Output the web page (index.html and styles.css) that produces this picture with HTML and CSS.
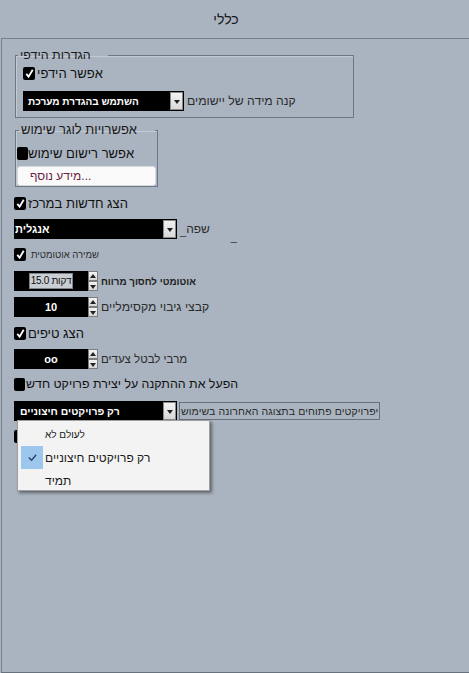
FILE: index.html
```html
<!DOCTYPE html>
<html lang="he">
<head>
    <meta charset="UTF-8">
    <title>כללי</title>
    <link rel="stylesheet" href="styles.css">
</head>
<body>
    <div class="title">כללי</div>

    <div class="panel">
        <fieldset class="group group-main">
            <legend>הגדרות הידפי</legend>
            <div class="check first">
                <span class="box"><svg viewBox="0 0 12 12"><path d="M2.5 6.5 L5 9.5 L9.5 2"/></svg></span>
                <span class="text">אפשר הידפי</span>
            </div>
            <div class="field gap-select">
                <div class="select select-scale">
                    <span class="value small">השתמש בהגדרת מערכת</span>
                    <span class="arrow"></span>
                </div>
                <span class="label">קנה מידה של יישומים</span>
            </div>
        </fieldset>

        <fieldset class="group group-log">
            <legend>אפשרויות לוגר שימוש</legend>
            <div class="check off-row">
                <span class="box empty"></span>
                <span class="text tight">אפשר רישום שימוש</span>
            </div>
            <div class="more">מידע נוסף...</div>
        </fieldset>

        <div class="check mt9">
            <span class="box"><svg viewBox="0 0 12 12"><path d="M2.5 6.5 L5 9.5 L9.5 2"/></svg></span>
            <span class="text">הצג חדשות במרכז</span>
        </div>

        <div class="field mt9">
            <div class="select">
                <span class="value lang-value">אנגלית</span>
                <span class="arrow"></span>
            </div>
            <span class="mnemonic">_</span>
            <span class="label lang">שפה</span>
            <span class="mnemonic far">_</span>
        </div>

        <div class="check mt8">
            <span class="box"><svg viewBox="0 0 12 12"><path d="M2.5 6.5 L5 9.5 L9.5 2"/></svg></span>
            <span class="text tiny">שמירה אוטומטית</span>
        </div>

        <div class="field mt10">
            <div class="spin">
                <div class="spin-field"><span class="spin-edit">15.0 דקות</span></div>
                <div class="spin-btns"><span class="up"></span><span class="down"></span></div>
            </div>
            <span class="label spin-label bold">אוטומטי לחסוך מרווח</span>
        </div>

        <div class="field mt6">
            <div class="spin">
                <div class="spin-field">10</div>
                <div class="spin-btns"><span class="up"></span><span class="down"></span></div>
            </div>
            <span class="label spin-label">קבצי גיבוי מקסימליים</span>
        </div>

        <div class="check mt9">
            <span class="box"><svg viewBox="0 0 12 12"><path d="M2.5 6.5 L5 9.5 L9.5 2"/></svg></span>
            <span class="text">הצג טיפים</span>
        </div>

        <div class="field mt9">
            <div class="spin">
                <div class="spin-field">oo</div>
                <div class="spin-btns"><span class="up"></span><span class="down"></span></div>
            </div>
            <span class="label spin-label small-label">מרבי לבטל צעדים</span>
        </div>

        <div class="check mt8">
            <span class="box empty"></span>
            <span class="text long">הפעל את ההתקנה על יצירת פרויקט חדש</span>
        </div>

        <div class="field mt10">
            <div class="select">
                <span class="value mid">רק פרויקטים חיצוניים</span>
                <span class="arrow"></span>
            </div>
            <span class="label boxed">יפרויקטים פתוחים בתצוגה האחרונה בשימוש</span>
        </div>

        <div class="check mt8">
            <span class="box empty"></span>
        </div>

        <!-- open dropdown of the select above -->
        <div class="menu">
            <div class="menu-item"><span class="mark"></span><span class="small-item">לעולם לא</span></div>
            <div class="menu-item"><span class="mark selected"><svg viewBox="0 0 12 12"><path d="M2 6 L5 9 L10 3"/></svg></span><span>רק פרויקטים חיצוניים</span></div>
            <div class="menu-item"><span class="mark"></span><span>תמיד</span></div>
        </div>
    </div>
</body>
</html>
```

FILE: styles.css
```css
* {
    margin: 0;
    padding: 0;
    box-sizing: border-box;
    font-family: "Liberation Sans", "DejaVu Sans", sans-serif;
}
body {
    background-color: #aab4c0;
    color: #111;
    height: 673px;
    overflow: hidden;
    display: flex;
    flex-direction: column;
}
.title {
    height: 38px;
    display: flex;
    align-items: center;
    justify-content: center;
    padding-right: 17px;
    font-size: 14px;
    color: #1a1a1a;
}
.panel {
    flex: 1;
    position: relative;
    margin-left: 1px;
    border-top: 1px solid #75808c;
    border-left: 1px solid #75808c;
    border-bottom: 1px solid #66717c;
    padding-left: 12px;
    display: flex;
    flex-direction: column;
    align-items: flex-start;
}
.group {
    border: 1px solid #6d7783;
    box-shadow: inset 1px 1px 0 #c3cad2;
    margin-left: 1px;
}
.group legend {
    font-size: 12.5px;
    line-height: 14px;
    padding: 0 17px 0 2px;
    color: #1a1a1a;
}
.group-main {
    width: 339px;
    margin-top: 9px;
    padding: 4px 0 6px 7px;
}
.group-main legend {
    margin-left: -5px;
}
.group-log {
    width: 142px;
    margin-top: 5px;
    padding: 0 1px 0 1px;
}
.group-log legend {
    margin-left: 2px;
    padding-right: 18px;
    font-size: 13px;
}
.check {
    display: flex;
    align-items: center;
    height: 14px;
}
.box {
    width: 12px;
    height: 13px;
    background: #000;
    border-radius: 2px;
    display: flex;
    align-items: center;
    justify-content: center;
    flex-shrink: 0;
}
.box svg {
    width: 11px;
    height: 11px;
    fill: none;
    stroke: #fff;
    stroke-width: 2;
}
.box.empty {
    width: 11px;
}
.text {
    font-size: 13px;
    margin-left: 2px;
    white-space: nowrap;
}
.text.tight {
    margin-left: 0;
}
.text.tiny {
    font-size: 9.5px;
    margin-left: 5px;
    color: #2a2a2a;
}
.text.long {
    font-size: 12.4px;
    margin-left: 1px;
}
.off-row {
    margin-top: 9px;
}
.more {
    margin-top: 6px;
    width: 139px;
    height: 20px;
    background: #fafafa;
    border: 1px solid #d6d9dd;
    border-radius: 3px;
    color: #6a1f45;
    font-size: 12px;
    line-height: 18px;
    padding-left: 12px;
}
.field {
    display: flex;
    align-items: center;
    height: 20px;
}
.gap-select {
    margin-top: 11px;
}
.select {
    width: 163px;
    height: 20px;
    background: #000;
    color: #fff;
    display: flex;
    align-items: center;
    justify-content: space-between;
    padding: 1px 1px 1px 4px;
    font-weight: bold;
    font-size: 12px;
}
.select-scale {
    width: 161px;
}
.value.small {
    font-size: 10px;
    padding-left: 1px;
}
.value.lang-value {
    font-size: 11px;
    padding-left: 0;
    margin-left: -3px;
}
.value.mid {
    font-size: 10.4px;
    padding-left: 2px;
}
.arrow {
    width: 13px;
    height: 18px;
    background: linear-gradient(#f2f2f2, #d8d8d8);
    border: 1px solid #8a8a8a;
    position: relative;
}
.arrow::after {
    content: "";
    position: absolute;
    left: 3px;
    top: 7px;
    border-left: 3px solid transparent;
    border-right: 3px solid transparent;
    border-top: 4px solid #222;
}
.label {
    margin-left: 3px;
    font-size: 12.2px;
    color: #2b2b2b;
    white-space: nowrap;
}
.label.lang {
    margin-left: 0;
    font-size: 12px;
}
.mnemonic {
    font-size: 11px;
    color: #333;
    margin-left: 3px;
    margin-top: 4px;
}
.mnemonic.far {
    margin-left: 21px;
    margin-top: 16px;
}
.label.boxed {
    margin-left: 2px;
    height: 18px;
    padding: 0 1px;
    border: 1px solid #66717d;
    font-size: 10.5px;
    line-height: 16px;
    letter-spacing: 0.1px;
}
.spin {
    display: flex;
    height: 20px;
}
.spin-field {
    width: 74px;
    height: 20px;
    background: #000;
    color: #fff;
    display: flex;
    align-items: center;
    justify-content: center;
    font-weight: bold;
    font-size: 11px;
}
.spin-edit {
    width: 44px;
    height: 16px;
    background: #c9ced4;
    border: 1px solid #7b848e;
    color: #111;
    font-weight: normal;
    font-size: 10px;
    letter-spacing: -0.3px;
    line-height: 14px;
    text-align: center;
    white-space: nowrap;
}
.spin-btns {
    width: 10px;
    display: flex;
    flex-direction: column;
}
.spin-btns span {
    flex: 1;
    background: linear-gradient(#f4f4f4, #d6d6d6);
    border: 1px solid #7d7d7d;
    position: relative;
}
.spin-btns .up::after,
.spin-btns .down::after {
    content: "";
    position: absolute;
    left: 1px;
    border-left: 3px solid transparent;
    border-right: 3px solid transparent;
}
.spin-btns .up::after {
    top: 2px;
    border-bottom: 4px solid #222;
}
.spin-btns .down::after {
    top: 3px;
    border-top: 4px solid #222;
}
.spin-label {
    margin-left: 3px;
}
.bold {
    font-size: 9.8px;
    font-weight: bold;
    color: #1e1e1e;
}
.small-label {
    font-size: 11.5px;
}
.mt6 { margin-top: 6px; }
.mt8 { margin-top: 8px; }
.mt9 { margin-top: 9px; }
.mt10 { margin-top: 10px; }
.menu {
    position: absolute;
    left: 15px;
    top: 381px;
    width: 193px;
    height: 71px;
    background: #f3f3f3;
    border: 1px solid #a0a0a0;
    box-shadow: 2px 2px 3px rgba(0, 0, 0, 0.45);
    padding: 2px 0 0 3px;
}
.menu-item {
    display: flex;
    align-items: center;
    height: 23px;
    font-size: 12px;
    color: #1a1a1a;
}
.mark {
    width: 22px;
    height: 23px;
    margin-right: 2px;
    display: flex;
    align-items: center;
    justify-content: center;
}
.mark.selected {
    background: #9cc6ec;
}
.mark svg {
    width: 11px;
    height: 11px;
    fill: none;
    stroke: #25406a;
    stroke-width: 1.4;
}
.small-item {
    font-size: 10px;
}
```
